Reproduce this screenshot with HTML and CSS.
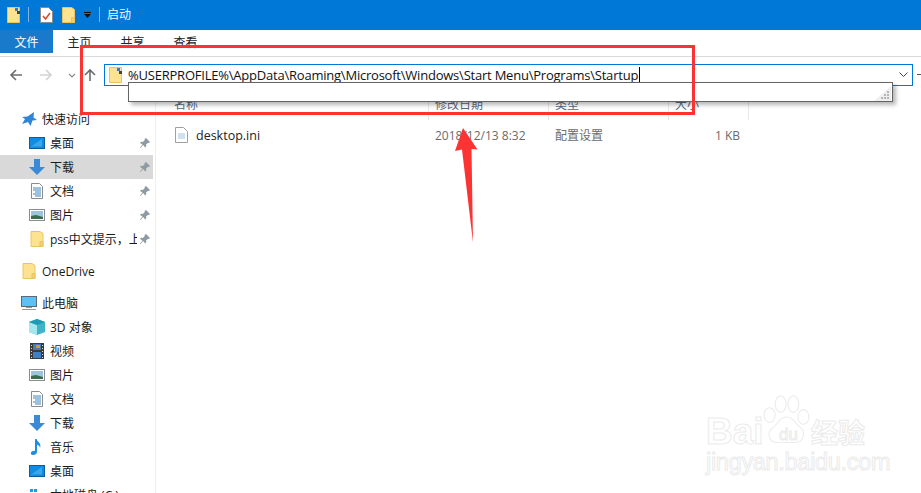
FILE: index.html
```html
<!DOCTYPE html>
<html lang="zh">
<head>
<meta charset="utf-8">
<title>启动</title>
<link rel="stylesheet" href="styles.css">
</head>
<body>
<svg class="defs" aria-hidden="true">
  <defs>
    <symbol id="folder" viewBox="0 0 13 16"><path d="M.5.5h9l3 2v13H.5z" fill="#fde38f" stroke="#e9c560"/><path d="M12.5 15.5h-3v-5h3z" fill="#f4cf6c" stroke="#e9c560"/></symbol>
    <symbol id="qfolder" viewBox="0 0 13 16"><path d="M.5.5h12v15H.5z" fill="#fde38f" stroke="#e9c560"/><path d="M8 1h3v3H8z" fill="#2f7fce"/><path d="M10 4h3v3h-3z" fill="#444"/></symbol>
    <symbol id="desk" viewBox="0 0 16 12"><rect x=".5" y=".5" width="15" height="11" fill="#0f8de6" stroke="#0a5d9e"/><path d="M2 9.5 13 2v7.5z" fill="#36a8f0"/></symbol>
    <symbol id="down" viewBox="0 0 16 16"><path d="M5 0h6v8h5l-8 8-8-8h5z" fill="#3a8ad8"/></symbol>
    <symbol id="doc" viewBox="0 0 12 16"><path d="M.5.5h8l3 3v12H.5z" fill="#fff" stroke="#8c8c8c"/><path d="M2 5h8M2 7h8M4 9h6M2 11h8M4 13h6" stroke="#3f82b8"/></symbol>
    <symbol id="pic" viewBox="0 0 16 12"><rect x=".5" y=".5" width="15" height="11" fill="#fff" stroke="#8c8c8c"/><rect x="2" y="2" width="12" height="8" fill="#9cc4dc"/><path d="M2 7l5-1 7 2v2H2z" fill="#3d6b4e"/></symbol>
    <symbol id="pin" viewBox="0 0 10 10"><path d="M6 0l4 4-1 1-1-.3-2 2 .2 1.800-1 1-2-2.500L.5 10 0 9.500l2.500-2.700L0 4.800l1-1 1.800.2 2-2L4.500 1z" fill="#8f9ba3"/></symbol>
    <symbol id="pc" viewBox="0 0 16 14"><rect x=".5" y=".5" width="15" height="10" fill="#5cc0f2" stroke="#5a6b78"/><path d="M5 11h6v1H5zM1 13h14v1H1z" fill="#8a9aa6"/></symbol>
    <symbol id="cube" viewBox="0 0 16 16"><path d="M8 0l8 3v10l-8 3-8-3V3z" fill="#3fb4c8"/><path d="M0 3l8 3v10l-8-3z" fill="#a6e6ee"/><path d="M8 0l8 3-8 3-8-3z" fill="#1f9ab4"/></symbol>
    <symbol id="film" viewBox="0 0 14 16"><rect width="14" height="16" fill="#3a3a3a"/><path d="M3 1h8v6H3z" fill="#4a78b8"/><path d="M3 9h8v6H3z" fill="#3f80c4"/><path d="M6 2h4v3H6z" fill="#c8a030"/><path d="M1 2h1v1H1zM1 5h1v1H1zM1 8h1v1H1zM1 11h1v1H1zM1 14h1v1H1zM12 2h1v1h-1zM12 5h1v1h-1zM12 8h1v1h-1zM12 11h1v1h-1zM12 14h1v1h-1z" fill="#ddd"/></symbol>
    <symbol id="note" viewBox="0 0 12 16"><path d="M4 0h1.600c.4 3 5.400 4 3.400 9 0-2-1.500-3-3-3.300V13c0 2-2 3-4 3s-2.500-1.500-2-2.500S2.500 11.500 4 12z" fill="#1b8fe0"/></symbol>
    <symbol id="drive" viewBox="0 0 16 12"><path d="M1 0h3v3H1zM5 0h3v3H5zM1 4h3v3H1zM5 4h3v3H5z" fill="#1f9ae0"/></symbol>
    <symbol id="star" viewBox="0 0 16 16"><path d="M13 1l-.5 5.500L16 9l-4.500.5L9.500 15l-2.500-4L1 13l3-5-3-2 5.500-.5z" fill="#2e86d6"/></symbol>
  </defs>
</svg>

<header class="titlebar">
  <svg class="ico16"><use href="#qfolder"/></svg>
  <span class="tsep"></span>
  <svg class="tdoc" viewBox="0 0 13 16"><path d="M.5.500h8l4 4v11H.5z" fill="#fff" stroke="#8c8c8c"/><path d="M3 9l2.500 3L10 6" fill="none" stroke="#d9482b" stroke-width="1.500"/></svg>
  <svg class="ico16"><use href="#folder"/></svg>
  <svg class="drop" viewBox="0 0 7 6"><path d="M0 0h7v1H0zM0 2h7L3.500 6z" fill="#111"/></svg>
  <span class="tsep"></span>
  <span class="ttext">启动</span>
</header>

<nav class="tabs">
  <span class="tab tab-file">文件</span>
  <span class="tab">主页</span>
  <span class="tab">共享</span>
  <span class="tab">查看</span>
</nav>

<div class="navbar">
  <svg class="nv" viewBox="0 0 14 14"><path d="M13 7H2M7 2 2 7l5 5" fill="none" stroke="#6d6d6d" stroke-width="1.600"/></svg>
  <svg class="nv nv-off" viewBox="0 0 14 14"><path d="M1 7h11M7 2l5 5-5 5" fill="none" stroke="#d2d2d2" stroke-width="1.600"/></svg>
  <svg class="nv-small" viewBox="0 0 8 5"><path d="M1 1l3 3 3-3" fill="none" stroke="#8a8a8a" stroke-width="1.200"/></svg>
  <svg class="nv" viewBox="0 0 14 14"><path d="M7 13V2M2 7l5-5 5 5" fill="none" stroke="#6d6d6d" stroke-width="1.600"/></svg>
  <div class="address">
    <svg class="ico16"><use href="#qfolder"/></svg>
    <span class="path">%USERPROFILE%\AppData\Roaming\Microsoft\Windows\Start Menu\Programs\Startup</span>
    <span class="caret"></span>
    <svg class="chev" viewBox="0 0 9 5"><path d="M.5.500l4 4 4-4" fill="none" stroke="#444"/></svg>
  </div>
  <span class="search-edge"></span>
</div>

<main class="body">
  <aside class="side">
    <div class="row top"><svg class="ic"><use href="#star"/></svg><span>快速访问</span></div>
    <div class="row"><svg class="ic"><use href="#desk"/></svg><span>桌面</span><svg class="pin"><use href="#pin"/></svg></div>
    <div class="row sel"><svg class="ic"><use href="#down"/></svg><span>下载</span><svg class="pin"><use href="#pin"/></svg></div>
    <div class="row"><svg class="ic"><use href="#doc"/></svg><span>文档</span><svg class="pin"><use href="#pin"/></svg></div>
    <div class="row"><svg class="ic"><use href="#pic"/></svg><span>图片</span><svg class="pin"><use href="#pin"/></svg></div>
    <div class="row"><svg class="ic"><use href="#folder"/></svg><span class="clip">pss中文提示，上传</span><svg class="pin"><use href="#pin"/></svg></div>
    <div class="row top gap"><svg class="ic"><use href="#folder"/></svg><span>OneDrive</span></div>
    <div class="row top gap"><svg class="ic"><use href="#pc"/></svg><span>此电脑</span></div>
    <div class="row"><svg class="ic"><use href="#cube"/></svg><span>3D 对象</span></div>
    <div class="row"><svg class="ic"><use href="#film"/></svg><span>视频</span></div>
    <div class="row"><svg class="ic"><use href="#pic"/></svg><span>图片</span></div>
    <div class="row"><svg class="ic"><use href="#doc"/></svg><span>文档</span></div>
    <div class="row"><svg class="ic"><use href="#down"/></svg><span>下载</span></div>
    <div class="row"><svg class="ic"><use href="#note"/></svg><span>音乐</span></div>
    <div class="row"><svg class="ic"><use href="#desk"/></svg><span>桌面</span></div>
    <div class="row"><svg class="ic"><use href="#drive"/></svg><span>本地磁盘 (C:)</span></div>
  </aside>
  <section class="list">
    <div class="cols head">
      <span class="c c-name">名称</span>
      <span class="c c-date">修改日期</span>
      <span class="c c-type">类型</span>
      <span class="c c-size">大小</span>
    </div>
    <div class="cols file">
      <span class="c c-name"><svg class="fileic" viewBox="0 0 13 16"><path d="M.5.500h8l4 4v11H.5z" fill="#fff" stroke="#a0a0a0"/><path d="M3 7h7M3 9h7M3 11h7" stroke="#9fc3dd"/></svg><span class="fname">desktop.ini</span></span>
      <span class="c c-date grey">2018/12/13 8:32</span>
      <span class="c c-type grey">配置设置</span>
      <span class="c c-size grey num">1 KB</span>
    </div>
  </section>
</main>

<div class="popup">
  <svg class="grip" viewBox="0 0 17 15"><path d="M17 0v15H0z" fill="#efefef"/><path d="M13 5h2v2h-2zM10 8h2v2h-2zM13 8h2v2h-2zM7 11h2v2H7zM10 11h2v2h-2zM13 11h2v2h-2z" fill="#b5b5b5"/></svg>
</div>
<div class="redbox"></div>
<svg class="arrow" viewBox="0 0 23 115"><path d="M8 0 0 23l7-1.500L18 114.500 16.500 21l6 .5z" fill="#fb3333"/></svg>
<div class="mark">
  <span class="m-bai">Bai</span>
  <svg class="paw" viewBox="0 0 50 58"><g fill="#fff" stroke="#ececec" stroke-width="1.200"><ellipse cx="6" cy="22" rx="6" ry="8"/><ellipse cx="18" cy="10" rx="6" ry="9"/><ellipse cx="32" cy="10" rx="6" ry="9"/><ellipse cx="43" cy="24" rx="6" ry="8"/><path d="M25 24c8 0 9 8 15 12 6 5 3 16-6 16H14C6 52 2 42 9 36c7-4 7-12 16-12z"/></g></svg>
  <span class="m-du">du</span>
  <span class="m-jy">经验</span>
  <span class="m-url">jingyan.baidu.com</span>
</div>
</body>
</html>
```
FILE: styles.css
```css
* { box-sizing: border-box; }
html, body { margin: 0; height: 493px; overflow: hidden; background: #fff; }
body { font: 12px "Open Sans", "Noto Sans CJK SC", sans-serif; color: #1a1a1a; position: relative; }
.defs { width: 0; height: 0; position: absolute; }

.titlebar { height: 30px; background: #0078d7; display: flex; align-items: center; padding: 0 0 1px 7px; color: #fff; }
.ico16 { width: 13px; height: 16px; flex: none; }
.tsep { width: 1px; height: 15px; background: #7db5e6; margin: 0 7px 0 8px; }
.tdoc { width: 13px; height: 16px; margin: 0 9px 0 4px; }
.drop { width: 7px; height: 6px; margin-left: 9px; }
.ttext { font-size: 12px; line-height: 16px; color: #f2f8fd; }

.tabs { height: 27px; display: flex; align-items: flex-start; border-bottom: 1px solid #dadada; }
.tab { height: 23px; line-height: 25px; width: 53px; text-align: center; color: #222; }
.tab-file { background: #1979ca; color: #fff; }

.navbar { height: 35px; display: flex; align-items: center; padding-left: 9px; }
.nv { width: 14px; height: 14px; flex: none; }
.nv-off { margin-left: 16px; }
.nv-small { width: 8px; height: 5px; margin: 1px 7px 0 15px; }
.address { width: 809px; height: 22px; margin-left: 7px; border: 1px solid #0078d7; display: flex; align-items: center; padding-left: 4px; }
.address .ico16 { margin-right: 6px; }
.path { font: 13px "Open Sans", sans-serif; letter-spacing: -0.22px; white-space: nowrap; color: #111; }
.caret { width: 1px; height: 15px; background: #000; margin-left: 1px; }
.chev { width: 9px; height: 5px; margin-left: auto; margin-right: 4px; }
.search-edge { width: 4px; height: 1px; background: #555; margin-left: 4px; }

.body { display: flex; height: 401px; }
.side { width: 156px; flex: none; border-right: 1px solid #eeeeee; padding: 15px 2px 0 0; overflow: hidden; }
.row { height: 24px; display: flex; align-items: center; padding-left: 29px; position: relative; white-space: nowrap; }
.row .ic { width: 16px; height: 16px; flex: none; margin-right: 5px; }
.row.top { padding-left: 21px; }
.row.top.gap { margin-top: 8px; }
.row.sel { background: #d9d9d9; }
.clip { width: 87px; overflow: hidden; display: block; }
.pin { width: 10px; height: 10px; position: absolute; left: 140px; top: 7px; }

.list { flex: 1; min-width: 0; }
.cols { display: flex; }
.c { display: block; padding-left: 6px; border-right: 1px solid transparent; flex: none; white-space: nowrap; }
.c-name { width: 273px; padding-left: 18px; }
.c-date, .c-type { width: 120px; }
.c-size { width: 80px; }
.head { height: 28px; }
.head .c { border-right-color: #e8e8e8; color: #5a6b80; line-height: 26px; height: 28px; }
.file { height: 24px; margin-top: 3px; align-items: center; }
.file .c-name { display: flex; align-items: center; padding-left: 19px; }
.fileic { width: 13px; height: 16px; margin-right: 8px; }
.fname { font-size: 12.5px; color: #222; }
.grey { color: #6b6b6b; }
.num { text-align: right; padding-right: 8px; }

.popup { position: absolute; left: 128px; top: 82px; width: 765px; height: 20px; background: #fff; border: 1px solid #646464; box-shadow: 3px 3px 4px rgba(0,0,0,.28); }
.grip { position: absolute; right: 1px; bottom: 0; width: 17px; height: 15px; }
.redbox { position: absolute; left: 80px; top: 45px; width: 615px; height: 70px; border: 3px solid #fb3333; }
.arrow { position: absolute; left: 455px; top: 128px; width: 23px; height: 115px; }

.mark { position: absolute; left: 700px; top: 392px; width: 180px; height: 84px; color: #fff; font-family: "Liberation Sans", sans-serif; }
.mark span { position: absolute; -webkit-text-stroke: 1px #ebebeb; white-space: nowrap; }
.m-bai { left: 6px; top: 20px; font-size: 37px; font-weight: 700; line-height: 40px; }
.paw { position: absolute; left: 62px; top: 3px; width: 50px; height: 53px; }
.m-du { left: 79px; top: 33px; font-size: 17px; line-height: 20px; }
.m-jy { left: 111px; top: 24px; font: 700 27px/32px "Noto Sans CJK SC", sans-serif; }
.m-url { left: 6px; top: 57px; font-size: 23.5px; line-height: 26px; letter-spacing: -0.3px; }
```
